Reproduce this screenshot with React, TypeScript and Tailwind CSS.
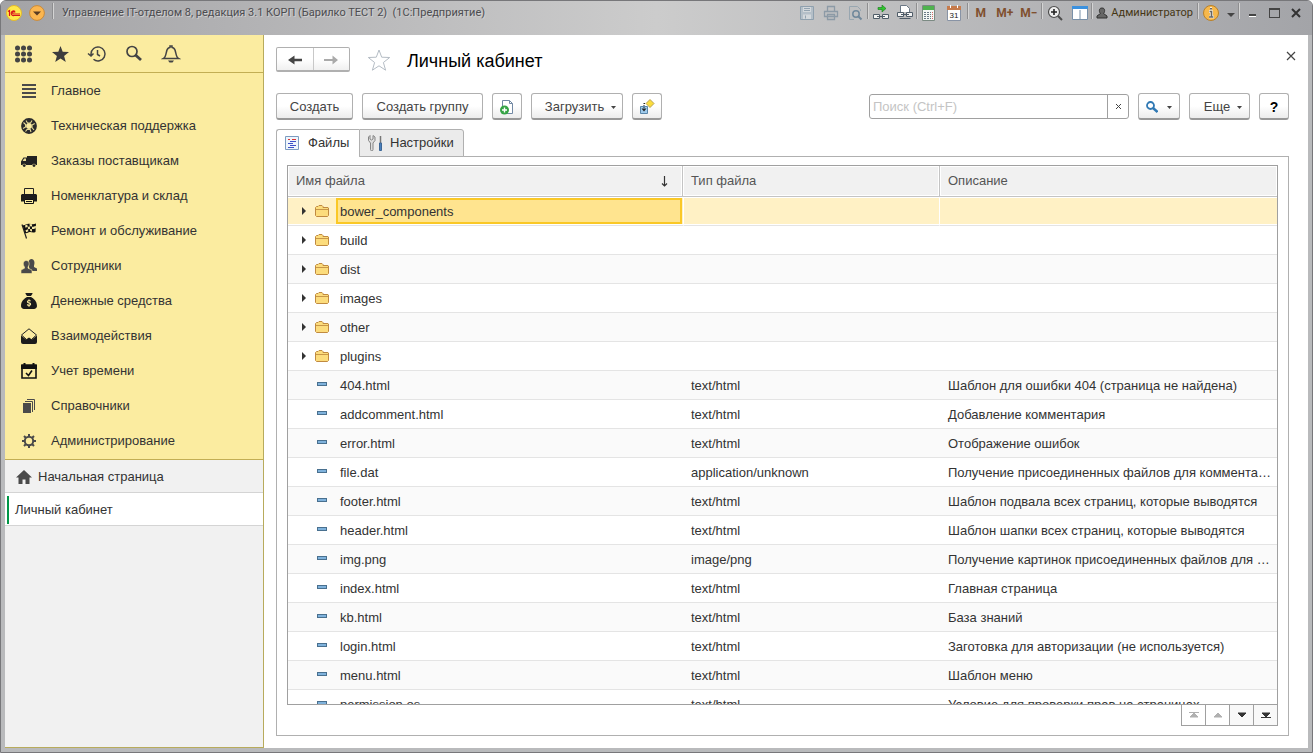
import type { ReactNode } from "react";
import { FaSackDollar } from "react-icons/fa6";

const rows = [
  { name: "404.html", type: "text/html", text: "Шаблон для ошибки 404 (страница не найдена)" },
  { name: "addcomment.html", type: "text/html", text: "Добавление комментария" },
  { name: "error.html", type: "text/html", text: "Отображение ошибок" },
  { name: "file.dat", type: "application/unknown", text: "Получение присоединенных файлов для комментариев" },
  { name: "footer.html", type: "text/html", text: "Шаблон подвала всех страниц, которые выводятся" },
  { name: "header.html", type: "text/html", text: "Шаблон шапки всех страниц, которые выводятся" },
  { name: "img.png", type: "image/png", text: "Получение картинок присоединенных файлов для комментариев" },
  { name: "index.html", type: "text/html", text: "Главная страница" },
  { name: "kb.html", type: "text/html", text: "База знаний" },
  { name: "login.html", type: "text/html", text: "Заготовка для авторизации (не используется)" },
  { name: "menu.html", type: "text/html", text: "Шаблон меню" },
  { name: "permission.os", type: "text/html", text: "Условие для проверки прав на страницах" },
];

const folders = ["bower_components", "build", "dist", "images", "other", "plugins"];

const Svg = ({ children, className = "size-4", box = "0 0 16 16" }: { children: ReactNode; className?: string; box?: string }) => (
  <svg viewBox={box} className={`shrink-0 ${className}`} fill="none" aria-hidden="true">
    {children}
  </svg>
);

/* Иконки разделов */
const menu = [
  {
    label: "Главное",
    icon: <Svg><path d="M1 1h14v2H1zM1 5h14v2H1zM1 9h14v2H1zM1 13h14v2H1z" fill="#4a4a4a" /></Svg>,
  },
  {
    label: "Техническая поддержка",
    icon: (
      <Svg>
        <circle cx="8" cy="8" r="5.4" stroke="#2b2b2b" strokeWidth="5" />
        <path d="M5 2.500L6.500 5 9.500 5 11 2.500M13.700 5.500L11 7v2.500l2 2.500M10 14l-.800-2.500H6L4.500 13.500M2 10.500L4.600 9V6.500L2.500 4.500" stroke="#e6da94" strokeWidth="1.100" />
      </Svg>
    ),
  },
  {
    label: "Заказы поставщикам",
    icon: (
      <Svg>
        <path d="M6 3h10v9h-1.200a2 2 0 0 0-3.600 0H5a2 2 0 0 0-3.600 0H0V8.500L2.500 4.500H6z" fill="#222" />
        <path d="M3 5.500h2V8H1.600z" fill="#e9dc97" />
        <circle cx="3.200" cy="12.600" r="1.400" fill="#222" />
        <circle cx="13" cy="12.600" r="1.400" fill="#222" />
      </Svg>
    ),
  },
  {
    label: "Номенклатура и склад",
    icon: (
      <Svg>
        <path d="M3.500 6V.5h9V6" stroke="#222" />
        <path d="M1 6h14l1 1v6.500H0V7z" fill="#1c1c1c" />
        <path d="M3.500 11.500h9v4h-9z" fill="#fbeca0" stroke="#111" />
        <path d="M5 13.500h6" stroke="#111" />
      </Svg>
    ),
  },
  {
    label: "Ремонт и обслуживание",
    icon: (
      <Svg>
        <path d="M1 1.500l4.500 14" stroke="#222" strokeWidth="1.200" />
        <path d="M1.500 2C4 3 5 .5 8 .8S12.500 1.500 15 .5L14.500 9c-2.500 1-3.500.2-5.500 0S6 11 4 10z" fill="#111" />
        <path d="M4 2.500l2.300-1 .4 2.300-2.200 1zM8.500 1l2.500.3v2.300L8.800 3.300zM12.800 3.600L15 3l-.2 2.300-2.100.6zM6.700 3.800l2.200-.3.100 2.400-2 .3zM11 3.800l1.800-.1-.1 2.300H11zM4.500 7.300l2.400-1 .5 2-2.200 1zM9 6l2 .2v2.200L9.200 8z" fill="#f3e6a2" />
      </Svg>
    ),
  },
  {
    label: "Сотрудники",
    icon: (
      <Svg>
        <path d="M8 9V7.500C6.800 5 7.500 1 10.500 1S14 5 13 7.500V9l3 1.500V13H9z" fill="#4a4a4a" />
        <path d="M0 15.500V12l3.500-1.800V9C1.500 6.500 2 2.500 5.200 2.500S9 6.500 7 9v1.200L11 12v3.500z" fill="#4a4a4a" stroke="#fbeca0" strokeWidth=".6" />
      </Svg>
    ),
  },
  { label: "Денежные средства", icon: <FaSackDollar className="size-4 text-[#1a1a1a]" /> },
  {
    label: "Взаимодействия",
    icon: (
      <Svg>
        <path d="M.5 7L8 .8 15.500 7M.5 7l5 4.500M15.500 7l-5 4.500" stroke="#222" />
        <path d="M0 7.500L5 11.500 8 9.500l3 2 5-4V14a2 2 0 0 1-2 2H2a2 2 0 0 1-2-2z" fill="#1c1c1c" />
      </Svg>
    ),
  },
  {
    label: "Учет времени",
    icon: (
      <Svg>
        <path d="M1 2h14v13H1z" stroke="#111" strokeWidth="1.600" />
        <path d="M0 2h16v4H0zM2.500 0h2v3h-2zM11.500 0h2v3h-2z" fill="#111" />
        <path d="M5 10l2.500 2.500L11 7.500" stroke="#111" strokeWidth="1.600" />
      </Svg>
    ),
  },
  {
    label: "Справочники",
    icon: (
      <Svg>
        <path d="M2 5h8v10H2z" fill="#4a4a4a" />
        <path d="M4 3.500h7.500V14M6 1.500h7.500V12" stroke="#4a4a4a" />
      </Svg>
    ),
  },
  {
    label: "Администрирование",
    icon: (
      <Svg>
        <circle cx="8" cy="8" r="4.200" stroke="#4a4a4a" strokeWidth="2" />
        <path d="M8 1v2.500M8 12.500V15M1 8h2.500M12.500 8H15M3 3l2 2M11 11l2 2M13 3l-2 2M5 11l-2 2" stroke="#4a4a4a" strokeWidth="2" />
      </Svg>
    ),
  },
];

const Caret = () => (
  <Svg className="h-[3px] w-[5px]" box="0 0 5 3"><path d="M0 0h5L2.500 3z" fill="#444" /></Svg>
);

const Button = ({ children, className = "", label }: { children: ReactNode; className?: string; label?: string }) => (
  <button
    aria-label={label}
    className={`flex h-[27px] shrink-0 items-center justify-center rounded-[3px] border border-b-2 border-[#b0b0b0] border-b-[#989898] bg-linear-to-b from-white from-50% to-[#ececec] pt-[2px] text-[#444] ${className}`}
  >
    {children}
  </button>
);

const Separator = () => <span className="h-4 w-px shrink-0 self-start bg-[#8e8e90] shadow-[1px_0_0_#d4d4d4]" />;

const TitleButton = ({ children, label, className = "w-6" }: { children: ReactNode; label: string; className?: string }) => (
  <button aria-label={label} className={`flex h-5 shrink-0 items-center justify-center ${className}`}>{children}</button>
);

const TitleBar = () => (
  <header className="flex h-[34px] shrink-0 items-start bg-linear-to-r from-[#a3a3a6] via-[#cccccc] to-[#a3a4a8] pt-[2px] pl-[5px] text-[11px]">
    <TitleButton label="Главное меню" className="w-4">
      <Svg>
        <circle cx="8" cy="8" r="7.500" fill="#ffe94a" stroke="#e3b92c" />
        <path d="M2 6.500L3.500 5.500V11M9 6.500a2.300 2.300 0 1 0-1 4h6M9 7.500a1.200 1.200 0 1 0-1 1.500h6" stroke="#d9141c" strokeWidth="1.200" />
      </Svg>
    </TitleButton>
    <TitleButton label="Сервис" className="ml-[7px] w-4">
      <Svg>
        <circle cx="8" cy="8" r="7.400" fill="#fbb650" stroke="#c98a3a" />
        <path d="M4 6.500h8L8 10.500z" fill="#5a3c22" />
      </Svg>
    </TitleButton>
    <span className="ml-[7px] flex"><Separator /></span>
    <h2 className="ml-[9px] min-w-0 flex-1 truncate pt-[2px] font-[Roboto] text-[#4c4c50] [text-shadow:1px_1px_0_#d0d0d0]">
      Управление IT-отделом 8, редакция 3.1 КОРП (Барилко ТЕСТ 2)&nbsp; (1С:Предприятие)
    </h2>
    <TitleButton label="Сохранить">
      <Svg><path d="M1.500 1.500h13v13h-13z" fill="#b4bfc8" stroke="#8fa0ae" /><path d="M4 2h8v5H4zM4 9.500h8V14H4z" fill="#d3d8dc" /><path d="M5 3.500h6M5 5.500h6M6.500 10.500v3" stroke="#93a3b0" /></Svg>
    </TitleButton>
    <TitleButton label="Печать" className="w-[23px]">
      <Svg><path d="M4.500 6V1.500h7V6M1.500 6.500h13v5h-13zM4.500 9.500h7v5h-7z" stroke="#8c9aa6" strokeWidth="1.300" /></Svg>
    </TitleButton>
    <TitleButton label="Предварительный просмотр" className="w-[25px]">
      <Svg><path d="M13.500 6V4.500L10.500 1.500h-8v13H7" stroke="#98a6b0" /><circle cx="9" cy="9" r="3.200" stroke="#71889b" strokeWidth="1.500" /><path d="M11.500 11.500l3 3" stroke="#71889b" strokeWidth="2" /></Svg>
    </TitleButton>
    <Separator />
    <TitleButton label="Получить ссылку" className="w-[26px]">
      <Svg><path d="M5 2.500h4V0l4 3.500L9 7V4.500H5z" fill="#2fc52f" stroke="#187818" strokeWidth=".6" /><path d="M.5 9.500h6v4h-6zM9.500 9.500h6v4h-6z" fill="#f4f4f4" stroke="#4f5c68" /><path d="M4 11.500h8" stroke="#4f5c68" /></Svg>
    </TitleButton>
    <TitleButton label="Перейти по ссылке" className="w-[22px]">
      <Svg><path d="M3.500 7V.5h6l3 3V7" fill="#fff" stroke="#6b7886" /><path d="M.5 7.500h6v4h-6zM9.500 7.500h6v4h-6z" fill="#f4f4f4" stroke="#4f5c68" /><path d="M4 9.500h8M2.500 13.500h11" stroke="#4f5c68" /></Svg>
    </TitleButton>
    <Separator />
    <TitleButton label="Калькулятор">
      <Svg><path d="M1.500.5h12v15h-12z" fill="#f3f7f4" stroke="#7b8a83" /><path d="M2 1h11v4H2z" fill="#4fb34f" /><path d="M3 7.500h7M3 9.500h7M3 11.500h7M3 13.500h7" stroke="#6a7a86" strokeDasharray="2 1" /><path d="M11.500 7v7" stroke="#d66" strokeDasharray="1 1" /></Svg>
    </TitleButton>
    <TitleButton label="Календарь" className="w-[26px]">
      <Svg><path d="M1.500 1.500h13v14h-13z" fill="#fff" stroke="#8893a5" /><path d="M1 1h14v4H1z" fill="#c67b4c" /><path d="M4.500 0v3M11.500 0v3" stroke="#fff" /><text x="8" y="13" textAnchor="middle" fontSize="8" fill="#222" fontFamily="Liberation Sans">31</text></Svg>
    </TitleButton>
    <Separator />
    <TitleButton label="Память" className="w-[25px]"><b className="font-[Roboto] text-xs text-[#80502f]">M</b></TitleButton>
    <TitleButton label="Прибавить к памяти" className="w-[23px]"><b className="font-[Roboto] text-xs text-[#80502f]">M+</b></TitleButton>
    <TitleButton label="Вычесть из памяти" className="w-[25px]"><b className="font-[Roboto] text-xs text-[#80502f]">M−</b></TitleButton>
    <Separator />
    <TitleButton label="Масштаб" className="w-[26px]">
      <Svg><circle cx="7" cy="7" r="5.500" fill="#eee" stroke="#4d4d4d" strokeWidth="1.200" /><path d="M7 4v6M4 7h6" stroke="#222" strokeWidth="1.600" /><path d="M11 11l4 4" stroke="#4d4d4d" strokeWidth="2" /></Svg>
    </TitleButton>
    <TitleButton label="Окна" className="w-[23px]">
      <Svg><path d="M.5 1.500h15v13H.5zM8 5v10" fill="#fff" stroke="#7990a8" /><path d="M0 1h16v3H0z" fill="#3c91de" /></Svg>
    </TitleButton>
    <Separator />
    <button className="flex h-5 items-center gap-[3px] px-1 font-[Roboto] text-[#453615]">
      <Svg className="size-3" box="0 0 12 12"><path d="M6 1c4 0 2.500 5 1.500 5.500L11 9v2H1V9l3.500-2.500C3.500 6 2 1 6 1z" fill="#666" stroke="#333" /></Svg>
      Администратор
    </button>
    <Separator />
    <TitleButton label="О программе" className="w-[26px]">
      <Svg><circle cx="8" cy="8" r="7.500" fill="#f6b84c" stroke="#b98029" /><path d="M6 6.500h2.500V12M6 12h5M7 3.500h2" stroke="#fff" strokeWidth="2.600" /><path d="M6.500 6.500h2V12M6 12h4.500M7 3.800h2" stroke="#666" strokeWidth="1.600" /></Svg>
    </TitleButton>
    <TitleButton label="Ещё" className="w-[14px]">
      <Svg className="mt-1 h-1 w-2" box="0 0 8 4"><path d="M0 0h8L4 4z" fill="#444" /></Svg>
    </TitleButton>
    <Separator />
    <TitleButton label="Свернуть" className="w-[26px]"><span className="mt-1 h-[3px] w-[7px] border-b border-white bg-[#444]" /></TitleButton>
    <TitleButton label="Развернуть" className="w-[18px]"><span className="h-[10px] w-[11px] border border-t-2 border-[#444]" /></TitleButton>
    <TitleButton label="Закрыть" className="mr-[3px] w-[26px]">
      <Svg className="size-[10px]" box="0 0 10 10"><path d="M1 1l8 8M9 1L1 9" stroke="#333" strokeWidth="2" /></Svg>
    </TitleButton>
  </header>
);

const Sidebar = () => (
  <aside className="flex w-[259px] shrink-0 flex-col border-r border-b border-[#b8ab5c] bg-[#f1f1f1]">
    <div className="flex h-[38px] shrink-0 items-center gap-[17px] border-b border-[#c2ae54] bg-[#fbeca0] pl-2">
      <button aria-label="Меню функций">
        <Svg className="size-5" box="0 0 20 20">
          <path d="M4.500 4h.01M10.500 4h.01M16.500 4h.01M4.500 10h.01M10.500 10h.01M16.500 10h.01M4.500 16h.01M10.500 16h.01M16.500 16h.01" stroke="#444" strokeWidth="5" strokeLinecap="round" />
        </Svg>
      </button>
      <button aria-label="Избранное">
        <Svg className="size-5" box="0 0 20 20"><path d="M10.500 2l2.200 5.800 6.300.3-4.900 3.900 1.700 6-5.300-3.400L5.200 18l1.700-6L2 8.100l6.300-.3z" fill="#3d3d3d" /></Svg>
      </button>
      <button aria-label="История">
        <Svg className="size-5" box="0 0 20 20"><path d="M4 11.500V10a7 7 0 1 1 2.500 5.300M1 9.500l3 2.500 2.500-2.500M10.500 6v4.500l2.500 1.500" stroke="#444" strokeWidth="1.500" /></Svg>
      </button>
      <button aria-label="Поиск">
        <Svg className="size-5" box="0 0 20 20"><circle cx="8" cy="7.500" r="5" stroke="#444" strokeWidth="1.700" /><path d="M11.500 11l5.500 5" stroke="#444" strokeWidth="2.800" /></Svg>
      </button>
      <button aria-label="Оповещения">
        <Svg className="size-5" box="0 0 20 20"><path d="M2.500 14.500C6 12.500 4.500 5.500 7.500 4L9 3.500V2h2v1.500l1.500.5c3 1.500 1.500 8.500 5 10.500z" stroke="#444" strokeWidth="1.500" /><path d="M7 16.500h6l-1.500 2h-3z" fill="#444" /></Svg>
      </button>
    </div>

    <nav className="border-b border-[#c2ae54] bg-[#fbeca0] pt-px">
      {menu.map((item) => (
        <a key={item.label} href="#" className="flex h-[35px] items-center gap-[14px] pb-px pl-4">
          {item.icon}
          {item.label}
        </a>
      ))}
    </nav>

    <a href="#" className="flex h-[33px] shrink-0 items-center gap-[6px] border-b border-[#d4d4d4] pt-[2px] pl-[11px]">
      <Svg><path d="M8 1l8 7.500h-2.500V15H9.500v-4.500h-3V15h-4V8.500H0z" fill="#4a4a4a" /></Svg>
      Начальная страница
    </a>
    <a href="#" className="flex h-[33px] shrink-0 items-center border-b border-[#d4d4d4] bg-white pt-[2px] pl-[2px]">
      <span className="mr-[6px] h-7 w-[2px] bg-[#009646]" />
      Личный кабинет
    </a>
  </aside>
);

const FileTable = () => (
  <div className="min-h-0 flex-1 overflow-hidden border border-[#a0a0a0]">
    <table className="w-full table-fixed border-separate border-spacing-0 text-left">
      <colgroup>
        <col className="w-[395px]" />
        <col className="w-[257px]" />
        <col />
      </colgroup>
      <thead>
        <tr className="h-[31px] text-[#555]">
          <th className="border-r border-b border-[#c4c4c4] bg-[#f1f1f1] px-2 font-normal shadow-[inset_0_0_0_1px_#fff]">
            <div className="flex items-center justify-between pr-[6px]">
              Имя файла
              <Svg className="h-[11px] w-[7px]" box="0 0 7 11"><path d="M3.500 0v10M1 7.500l2.500 2.500L6 7.500" stroke="#333" strokeWidth="1.200" /></Svg>
            </div>
          </th>
          <th className="border-r border-b border-[#c4c4c4] bg-[#f1f1f1] px-2 font-normal shadow-[inset_0_0_0_1px_#fff]">Тип файла</th>
          <th className="border-b border-[#c4c4c4] bg-[#f1f1f1] px-2 font-normal shadow-[inset_0_0_0_1px_#fff]">Описание</th>
        </tr>
      </thead>
      <tbody>
        {folders.map((name, i) => (
          <tr key={name} className={i === 0 ? "bg-[#fff1c5]" : i % 2 ? "bg-white" : "bg-[#fafafa]"}>
            <td className={`h-[29px] border-b border-[#e4e4e4] p-0 ${i === 0 ? "shadow-[inset_0_1px_0_#fff,inset_0_-1px_0_#fff]" : ""}`}>
              <div className="flex h-7 items-center pl-[14px]">
                <Svg className="h-2 w-1" box="0 0 4 8"><path d="M0 0l4 4-4 4z" fill="#333" /></Svg>
                <Svg className="ml-[9px] h-3 w-[14px]" box="0 0 14 12">
                  <path d="M.5 10.500v-8l1-1H3l1-1h3l1 1v1h5l.5.5v7.500l-1 1H1.500z" fill="#fcdc7c" stroke="#c08a40" />
                  <path d="M1 4.500h12" stroke="#c99748" />
                </Svg>
                {i === 0 ? (
                  <span className="mr-px ml-[7px] flex h-[26px] flex-1 items-center border-2 border-[#fac826] bg-[#ffe48f] pt-[2px] pl-[2px]">{name}</span>
                ) : (
                  <span className="ml-[11px] pt-[2px]">{name}</span>
                )}
              </div>
            </td>
            <td className={`border-b border-[#e4e4e4] ${i === 0 ? "border-x border-x-white shadow-[inset_0_1px_0_#fff,inset_0_-1px_0_#fff]" : ""}`} />
            <td className={`border-b border-[#e4e4e4] ${i === 0 ? "shadow-[inset_0_1px_0_#fff,inset_0_-1px_0_#fff]" : ""}`} />
          </tr>
        ))}
        {rows.map((row, i) => (
          <tr key={row.name} className={i % 2 ? "bg-white" : "bg-[#fafafa]"}>
            <td className="h-[29px] border-b border-[#e4e4e4] p-0 pt-[2px]">
              <div className="flex items-center pl-[29px]">
                <span className="mr-[13px] mb-1 h-[4px] w-[10px] border border-[#49708f] bg-[#7fb2dc]" />
                {row.name}
              </div>
            </td>
            <td className="border-b border-[#e4e4e4] px-2 pt-[2px] pb-0">{row.type}</td>
            <td className="truncate border-b border-[#e4e4e4] pt-[2px] pr-[6px] pb-0 pl-2">{row.text}</td>
          </tr>
        ))}
      </tbody>
    </table>
  </div>
);

const pager = [
  { label: "В начало", path: "M2 .5h10M3 5l4-4 4 4z", off: true },
  { label: "Вверх", path: "M3 5l4-4 4 4z", off: true },
  { label: "Вниз", path: "M3 1h8L7 5z", off: false },
  { label: "В конец", path: "M3 1h8L7 5zM2 5.500h10", off: false },
];

export default function App() {
  return (
    <div className="flex h-screen flex-col overflow-hidden rounded-t-md border border-[#77777a] bg-[#b9babc] font-['Liberation_Sans',sans-serif] text-[13px] leading-4 text-[#333]">
      <TitleBar />

      <div className="mx-1 mb-1 flex min-h-0 flex-1 bg-white">
        <Sidebar />

        <main className="flex min-w-0 flex-1 flex-col pt-3 pr-[19px] pb-3 pl-3">
          {/* Заголовок */}
          <div className="flex h-[25px] shrink-0 items-center">
            <div className="flex h-[25px] w-[74px] rounded-[2px] border border-b-2 border-[#b0b0b0] bg-linear-to-b from-white from-50% to-[#f0f0f0]">
              <button aria-label="Назад" className="flex flex-1 items-center justify-center border-r border-[#c8c8c8] pt-px">
                <Svg className="h-[10px] w-[14px]" box="0 0 14 10"><path d="M14 3.700v2.600H6.500V9.500L0 5 6.500.5v3.200z" fill="#444" /></Svg>
              </button>
              <button aria-label="Вперед" className="flex flex-1 items-center justify-center pt-px">
                <Svg className="h-[10px] w-[14px]" box="0 0 14 10"><path d="M0 3.900v2.200h8.500v3.400L14 5 8.500.5v3.400z" fill="#aaa" /></Svg>
              </button>
            </div>
            <button aria-label="В избранное" className="ml-[17px]">
              <Svg className="size-6" box="0 0 24 24"><path d="M12 2l2.700 7.200 8 .3-6.300 5 2.200 7.700L12 17.800l-6.600 4.400 2.200-7.700-6.300-5 8-.3z" stroke="#b4bcc4" /></Svg>
            </button>
            <h1 className="ml-4 flex-1 pt-[2px] text-lg text-black">Личный кабинет</h1>
            <button aria-label="Закрыть" className="-mr-2 self-start pt-[3px]">
              <Svg className="size-3" box="0 0 12 12"><path d="M2 2l8 8M10 2l-8 8" stroke="#444" strokeWidth="1.200" /></Svg>
            </button>
          </div>

          {/* Командная панель */}
          <div className="mt-[21px] flex shrink-0 gap-[9px]">
            <Button className="w-[77px]">Создать</Button>
            <Button className="w-[121px]">Создать группу</Button>
            <Button className="w-[30px]" label="Создать из файла">
              <Svg><path d="M3.500 8V1.500h7l3 3v10H8" fill="#fff" stroke="#7289a4" /><path d="M10.500 1.500v3h3" stroke="#7289a4" /><circle cx="5.500" cy="11" r="4.500" fill="#35a345" /><path d="M5.500 8.500v5M3 11h5" stroke="#fff" strokeWidth="1.400" /></Svg>
            </Button>
            <Button className="w-[92px] gap-[7px] pl-[7px]">Загрузить<Caret /></Button>
            <Button className="w-[30px]" label="Переместить">
              <Svg><path d="M11 .5l4 4-4 4-4-4z" fill="#fbdc3c" stroke="#b9a24c" /><path d="M1.500 7.500h7v7h-7z" fill="#9fcbec" stroke="#5a86aa" /><path d="M5 4v6M5 4.500h2" stroke="#222" strokeDasharray="1 1" /><path d="M2.500 9.500h5L5 12.500z" fill="#222" /></Svg>
            </Button>
            <div className="my-px ml-auto flex h-[25px] w-[260px] rounded-[3px] border border-[#a0a0a0]">
              <input type="text" aria-label="Поиск" placeholder="Поиск (Ctrl+F)" className="min-w-0 flex-1 px-[3px] outline-none placeholder:text-[#c4c4c4]" />
              <button aria-label="Очистить" className="flex w-[21px] items-center justify-center border-l border-[#a0a0a0]">
                <Svg className="size-[7px]" box="0 0 7 7"><path d="M1 1l5 5M6 1L1 6" stroke="#444" /></Svg>
              </button>
            </div>
            <Button className="w-[42px] gap-[9px]" label="Найти">
              <Svg className="size-3" box="0 0 12 12"><circle cx="4.500" cy="4.500" r="3.500" stroke="#3079b4" strokeWidth="1.800" /><path d="M7 7l4.500 4" stroke="#3079b4" strokeWidth="2.400" /></Svg>
              <Caret />
            </Button>
            <Button className="w-[61px] gap-[7px] pl-[7px]">Еще<Caret /></Button>
            <Button className="w-[30px] text-black" label="Справка"><span className="text-sm font-bold">?</span></Button>
          </div>

          {/* Закладки */}
          <div className="z-10 -mb-px mt-[9px] flex h-7 shrink-0" role="tablist">
            <button role="tab" aria-selected="true" className="flex w-[83px] items-center gap-2 rounded-tl-[3px] border-t border-l border-[#b0b0b0] bg-white pb-px pl-[7px]">
              <Svg><path d="M1.500 1.500h13v13h-13z" fill="#eef5fc" stroke="#7c9cc0" /><path d="M4 4.500h2M8 4.500h4" stroke="#d33" /><path d="M6 6.500h6M4 8.500h5M6 10.500h6M4 12.500h6" stroke="#3c50c8" /></Svg>
              Файлы
            </button>
            <button role="tab" aria-selected="false" className="flex w-[105px] items-center gap-[6px] rounded-tr-[3px] border border-[#b0b0b0] bg-[#ebebeb] pl-2">
              <Svg><path d="M5 .500v3.500L3.500 5 2 4V.500L.500 2v3.500L2.500 8v6.500a1.200 1.200 0 0 0 2.500 0V8l2-2.500V2z" fill="#ddd" stroke="#858585" /><path d="M12.500 1v7" stroke="#777" strokeWidth="1.500" /><path d="M11.500 8h2v7.500h-2z" fill="#4a80bd" stroke="#3d6797" /></Svg>
              Настройки
            </button>
          </div>
          <section className="flex min-h-0 flex-1 flex-col border border-[#b0b0b0] px-[10px] pt-2 pb-[9px]">
            <FileTable />
            <div className="-mt-px flex h-[22px] shrink-0 justify-end">
              {pager.map((p) => (
                <button
                  key={p.label}
                  aria-label={p.label}
                  disabled={p.off}
                  className={`-ml-px flex w-[25px] items-center justify-center border border-[#a0a0a0] ${p.off ? "bg-white text-[#b0b0b0]" : "bg-[#f8f8f8] text-[#333]"}`}
                >
                  <Svg className="h-[6px] w-[14px]" box="0 0 14 6"><path d={p.path} fill="currentColor" stroke="currentColor" /></Svg>
                </button>
              ))}
            </div>
          </section>
        </main>
      </div>
    </div>
  );
}
